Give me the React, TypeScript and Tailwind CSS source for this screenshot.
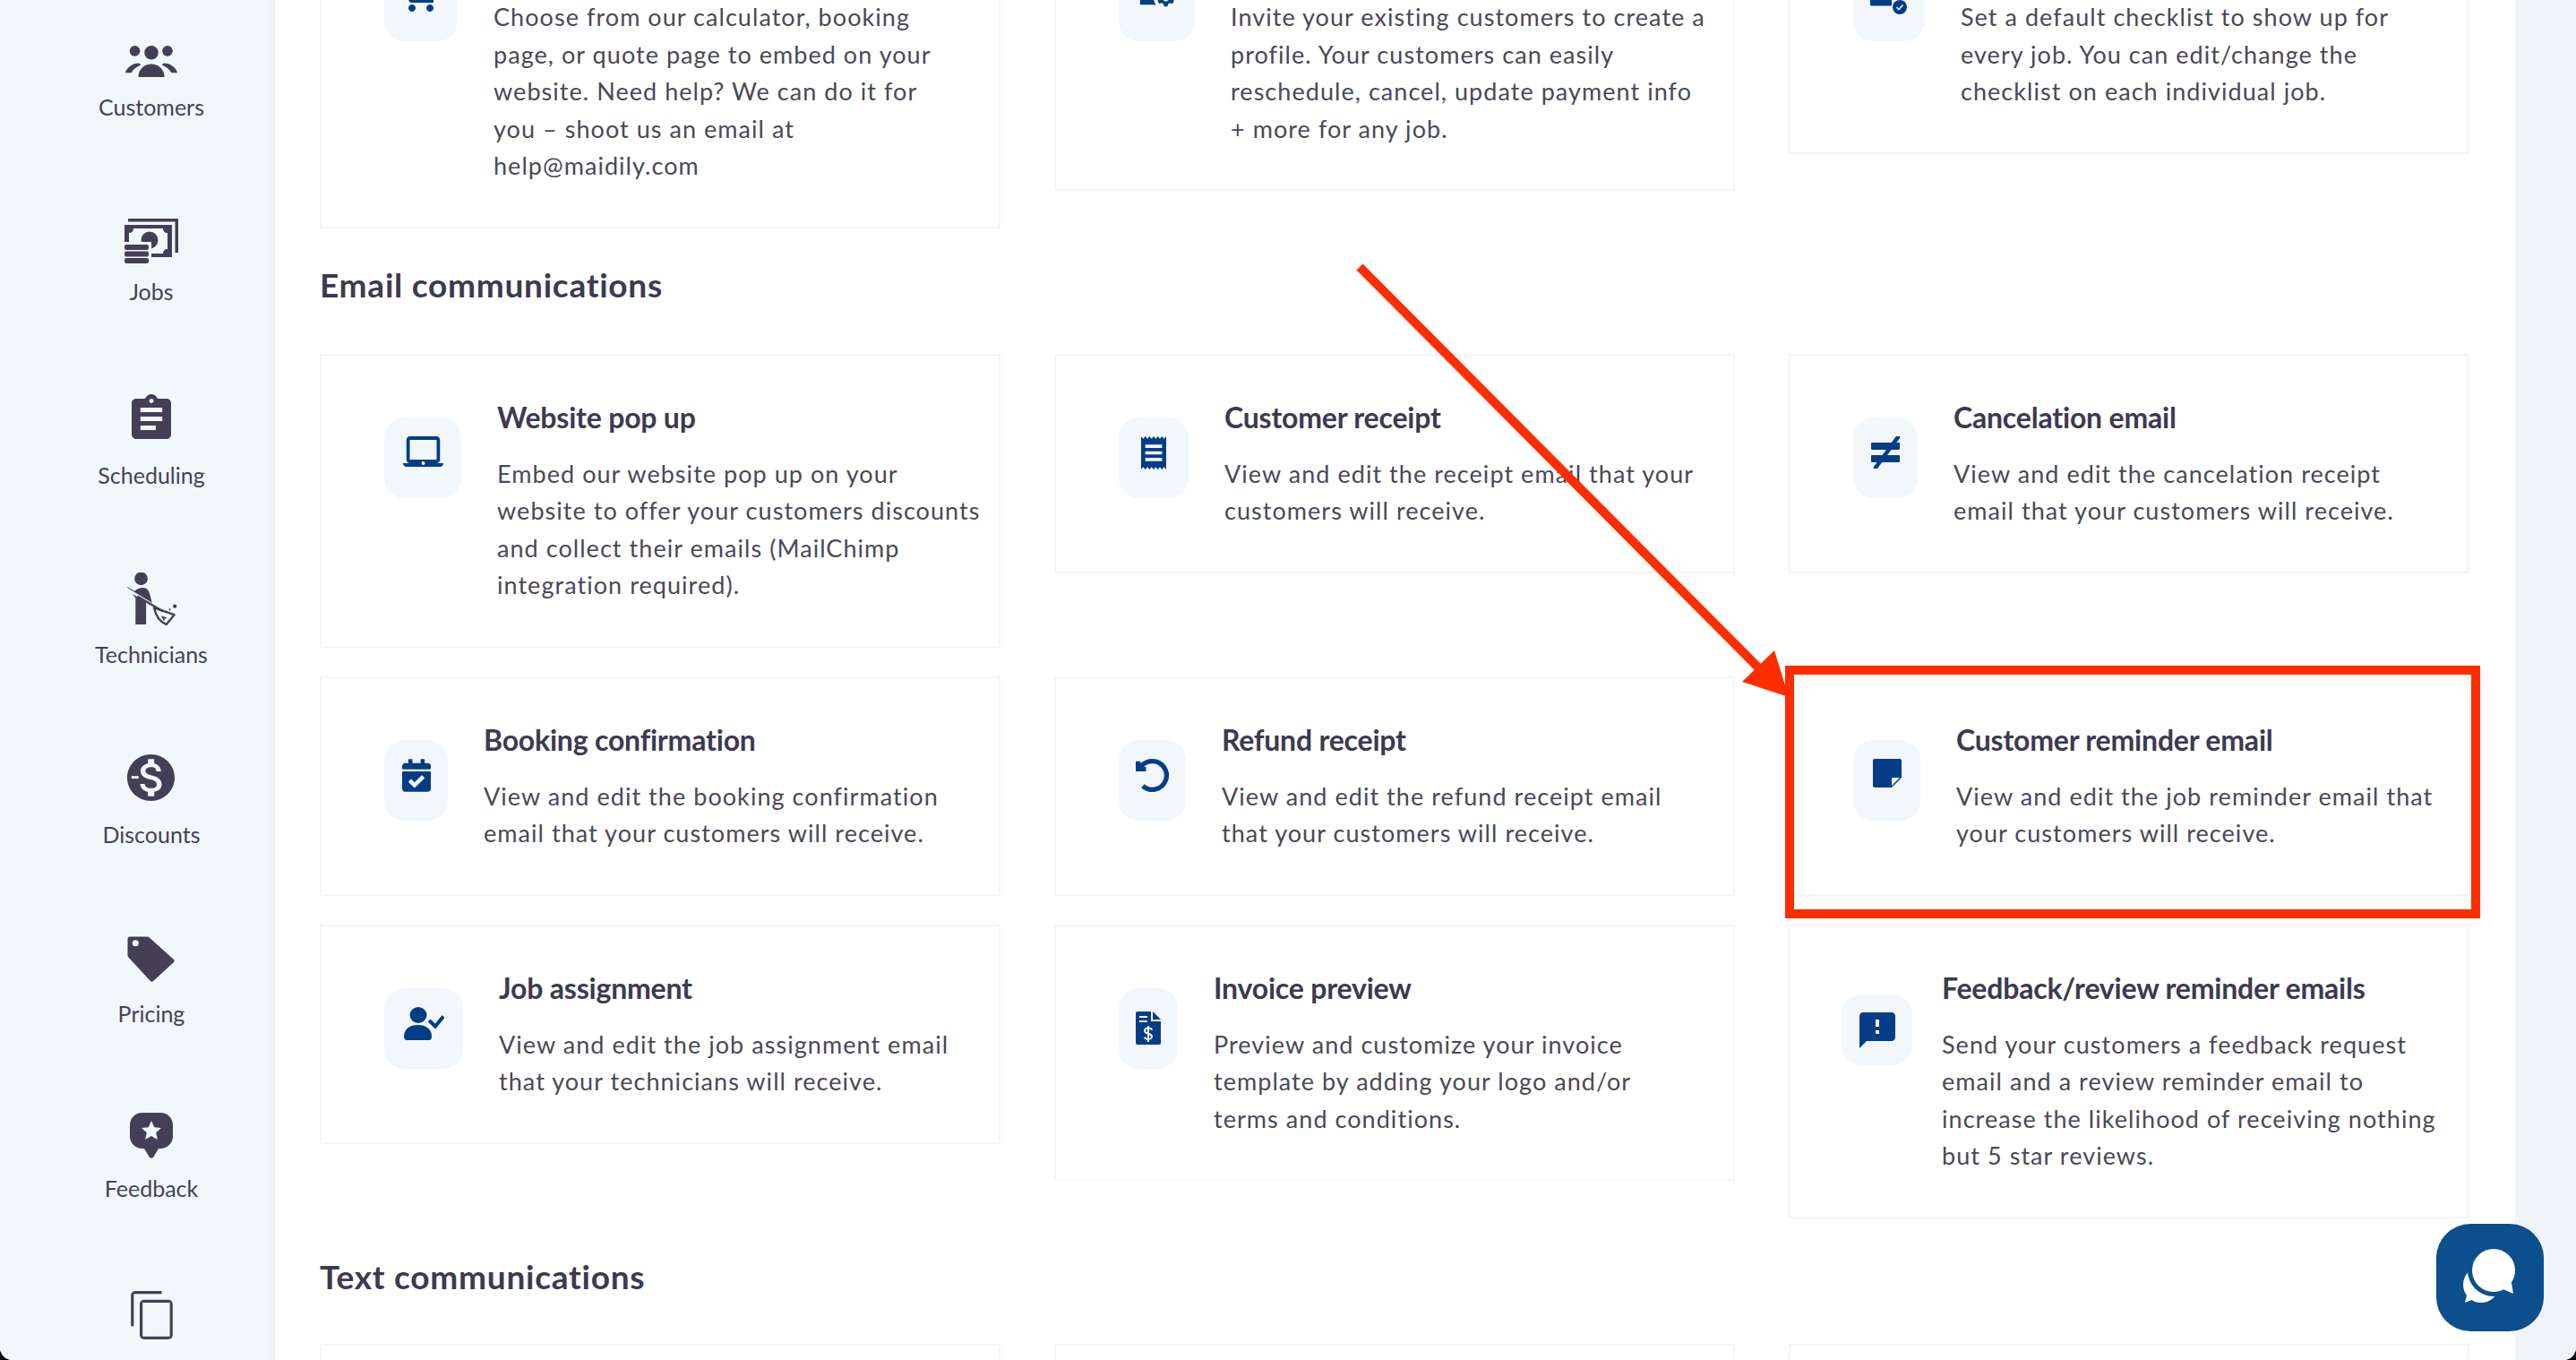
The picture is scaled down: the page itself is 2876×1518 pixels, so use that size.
import React from 'react';
import { MdShoppingCart, MdManageAccounts, MdAssignment, MdFeedback } from 'react-icons/md';
import { FaCalendarCheck } from 'react-icons/fa';

const BLUE = '#043d85';
const NAV = '#443f56';

// sidebar glyphs
const CustomersIcon = () => (
  <svg viewBox="0 0 60 36" className="h-[35px] w-[60px]" fill={NAV}>
    <circle cx="11" cy="6" r="6" />
    <circle cx="30" cy="8" r="8" />
    <circle cx="48.5" cy="6" r="6" />
    <path d="M15 36C15 27 22 21 30 21s15 6 15 15z" />
    <path d="M0 31C2 25 8 20 16 20l2 2C13 24 9 27 7 31z" />
    <path d="M60 31C58 25 52 20 44 20l-2 2c5 2 9 5 11 9z" />
  </svg>
);

const JobsIcon = () => (
  <svg viewBox="0 0 60 50" className="h-[50px] w-[60px]" fill={NAV}>
    <path d="M4 0h56v38h-3.5V3.5H4z" />
    <path d="M0 7h53v36H0z" />
    <path d="M10 11h33c0 3 2 5 5 5v18c-3 0-5 2-5 5H12c0-3-6-5-7-5V16c3 0 5-2 5-5z" fill="#f2f7fb" />
    <circle cx="28" cy="24" r="9.5" />
    <path d="M0 26h30v24H0z" fill="#f2f7fb" />
    <rect x="0" y="29" width="27" height="6" rx="2" />
    <rect x="0" y="36.5" width="27" height="6" rx="2" />
    <rect x="0" y="44" width="27" height="6" rx="2" />
  </svg>
);

const SchedulingIcon = () => (
  <MdAssignment viewBox="3 1 18 20" className="h-[50px] w-[44px]" color={NAV} preserveAspectRatio="none" />
);

const TechniciansIcon = () => (
  <svg viewBox="9 9 60 60" className="h-[59px] w-[60px]" fill={NAV}>
    <circle cx="27.3" cy="16" r="7.5" />
    <path d="M11 25l9 5c3-3 9-5 13-3 2 1 3 3 4 6l3 11-7-3v27H21V38z" />
    <path d="M10 27l46 28" stroke="#f2f7fb" strokeWidth="3" />
    <path d="M23 36l29 17" stroke={NAV} strokeWidth="2.5" />
    <path d="M42 49l23 8-9 11c-8-3-12-10-14-19z" fill="none" stroke={NAV} strokeWidth="2.4" strokeLinejoin="round" />
    <path d="M50 58l6 2-3 4z" />
    <circle cx="65.6" cy="47.3" r="2.2" />
    <circle cx="60" cy="51" r="1.1" />
  </svg>
);

const DiscountsIcon = () => (
  <svg viewBox="2 2 20 20" className="h-[52px] w-[53px]" preserveAspectRatio="none">
    <path
      fill={NAV}
      d="M12 2C6.48 2 2 6.48 2 12s4.48 10 10 10 10-4.48 10-10S17.52 2 12 2zm1.41 16.09V20h-2.67v-1.93c-1.71-.36-3.16-1.46-3.27-3.4h1.96c.1 1.05.82 1.87 2.65 1.87 1.96 0 2.4-.98 2.4-1.59 0-.83-.44-1.61-2.67-2.14-2.48-.6-4.18-1.62-4.18-3.67 0-1.72 1.39-2.84 3.11-3.21V4h2.67v1.95c1.86.45 2.79 1.86 2.87 3.39h-1.96c-.05-1.11-.64-1.87-2.22-1.87-1.5 0-2.4.68-2.4 1.64 0 .84.65 1.39 2.67 1.91s4.18 1.39 4.18 3.91c-.01 1.83-1.38 2.83-3.12 3.16z"
    />
    <rect x="3.8" y="11.3" width="3" height="1.1" fill="#f2f7fb" />
  </svg>
);

const PricingIcon = () => (
  <svg viewBox="0 0 54 54" className="h-[53px] w-[53px]">
    <path
      d="M3 4h20l28 25-23 21L3 23z"
      fill={NAV}
      stroke={NAV}
      strokeWidth="5"
      strokeLinejoin="round"
    />
    <circle cx="9.5" cy="9" r="3.6" fill="#f2f7fb" />
  </svg>
);

const FeedbackIcon = () => (
  <svg viewBox="0 0 48 51" className="h-[51px] w-[48px]">
    <path
      d="M14 0h20c8 0 14 6 14 14v12c0 8-6 14-14 14h-2l-6 10c-1 1-3 1-4 0l-6-10h-2C6 40 0 34 0 26V14C0 6 6 0 14 0z"
      fill={NAV}
    />
    <path
      d="M24 9l3.3 7.2 7.7.8-5.8 5.2 1.7 7.8-6.900-4-6.900 4 1.700-7.800L13 17l7.700-.8z"
      fill="#f2f7fb"
    />
  </svg>
);

const CopyIcon = () => (
  <svg viewBox="2 1 19 22" className="h-[54px] w-[47px]" fill={NAV}>
    <path d="M16 1H4c-1.100 0-2 .9-2 2v14h1.300V2.300H16zm3 4H8c-1.100 0-2 .9-2 2v14c0 1.100.9 2 2 2h11c1.100 0 2-.9 2-2V7c0-1.100-.9-2-2-2zm.7 16.700H7.300V6.300h12.400z" />
  </svg>
);

// card glyphs
const LaptopIcon = () => (
  <svg viewBox="0 3 24 18" className="h-[36px] w-[45px]" fill={BLUE} preserveAspectRatio="none">
    <path d="M20 18c1.100 0 1.990-.9 1.990-2L22 5c0-1.100-.9-2-2-2H4c-1.100 0-2 .9-2 2v11c0 1.100.9 2 2 2H0c0 1.100.9 2 2 2h20c1.100 0 2-.9 2-2h-4zM4 5h16v11H4V5zm8 14c-.55 0-1-.45-1-1s.45-1 1-1 1 .45 1 1-.45 1-1 1z" />
  </svg>
);

const ReceiptIcon = () => (
  <svg viewBox="3 2 18 20" className="h-[37px] w-[28px]" fill={BLUE} preserveAspectRatio="none">
    <path d="M18 17H6v-2h12v2zm0-4H6v-2h12v2zm0-4H6V7h12v2zM3 22l1.500-1.500L6 22l1.500-1.500L9 22l1.500-1.500L12 22l1.500-1.500L15 22l1.500-1.500L18 22l1.500-1.500L21 22V2l-1.500 1.500L18 2l-1.500 1.500L15 2l-1.500 1.500L12 2l-1.500 1.500L9 2 7.500 3.500 6 2 4.500 3.500 3 2v20z" />
  </svg>
);

const NotEqualIcon = () => (
  <svg viewBox="0 0 32 36" className="h-[36px] w-[32px]" fill={BLUE}>
    <rect x="0" y="7" width="32" height="8" rx="1" />
    <rect x="0" y="21" width="32" height="8" rx="1" />
    <path d="M30 1L5 35" stroke={BLUE} strokeWidth="4.500" strokeLinecap="round" />
  </svg>
);

const RefundIcon = () => (
  <svg viewBox="1.500 1.500 21 21" className="h-[37px] w-[37px]" fill="none" stroke={BLUE} strokeWidth="3">
    <path d="M6 18.700A9 9 0 1 0 12 3 9.750 9.750 0 0 0 5.260 5.740L3 8" />
    <path d="M3 3v5h5" />
  </svg>
);

const NoteIcon = () => (
  <svg viewBox="0 0 32 32" className="h-[32px] w-[32px]" fill={BLUE}>
    <path d="M2 0h28a2 2 0 0 1 2 2v19L21 32H2a2 2 0 0 1-2-2V2a2 2 0 0 1 2-2z" />
    <path d="M21 21h9l-9 9z" fill="#f2f7fb" />
  </svg>
);

const UserCheckIcon = () => (
  <svg viewBox="0 0 45 37" className="h-[37px] w-[45px]" fill={BLUE}>
    <ellipse cx="16" cy="9" rx="9.500" ry="9" />
    <path d="M0 33c0-9 7-13 15.500-13S31 24 31 33c0 2-1 4-3 4H3c-2 0-3-2-3-4z" />
    <path d="M28 15l7 6.500 9-11" fill="none" stroke={BLUE} strokeWidth="4" />
  </svg>
);

const InvoiceIcon = () => (
  <svg viewBox="0 0 28 37" className="h-[37px] w-[28px]">
    <path d="M2 0h15v11h11v24a2 2 0 0 1-2 2H2a2 2 0 0 1-2-2V2a2 2 0 0 1 2-2z" fill={BLUE} />
    <path d="M19 0l9 9h-9z" fill={BLUE} />
    <path d="M4 6h9M4 11h9" stroke="#f2f7fb" strokeWidth="2" />
    <path
      d="M18.500 20.500c-1-1.500-3-2-4.500-2s-4 .7-4 3 2.500 2.800 4 3.200 4 1 4 3.200-2.500 3-4 3-3.500-.5-4.500-2M14 16v18"
      fill="none"
      stroke="#f2f7fb"
      strokeWidth="2"
    />
  </svg>
);

const BubbleAlertIcon = () => <MdFeedback viewBox="2 2 20 20" className="h-[40px] w-[40px]" color={BLUE} />;

const CalendarIcon = () => <FaCalendarCheck className="h-[37px] w-[32px]" color={BLUE} />;

const CartIcon = () => <MdShoppingCart className="h-[48px] w-[48px]" color={BLUE} />;

const AccountsIcon = () => <MdManageAccounts className="h-[46px] w-[46px]" color={BLUE} />;

const ChecklistIcon = () => (
  <svg viewBox="0 0 42 37" className="h-[37px] w-[42px]" fill={BLUE}>
    <rect x="0" y="18" width="24" height="9.500" rx="1" />
    <circle cx="33" cy="29" r="8" />
    <path d="M29.500 29l2.500 2.500 4.500-5" fill="none" stroke="#f2f7fb" strokeWidth="1.600" />
  </svg>
);

const ChatIcon = () => (
  <svg viewBox="0 0 120 120" className="h-[120px] w-[120px]">
    <circle cx="50" cy="68" r="20" fill="#fff" />
    <path d="M32 88l15-6-11-10z" fill="#fff" />
    <circle cx="64" cy="52" r="29" fill="#0b4f8c" />
    <circle cx="64" cy="52" r="24" fill="#fff" />
    <path d="M72 72l14 6-3-18z" fill="#fff" />
  </svg>
);

const navItems = [
  { label: 'Customers', icon: <CustomersIcon />, labelGap: 'mt-[18px]', after: 'mb-[110px]' },
  { label: 'Jobs', icon: <JobsIcon />, labelGap: 'mt-[16px]', after: 'mb-[100px]' },
  { label: 'Scheduling', icon: <SchedulingIcon />, labelGap: 'mt-[25px]', after: 'mb-[94px]' },
  { label: 'Technicians', icon: <TechniciansIcon />, labelGap: 'mt-[17px]', after: 'mb-[97px]' },
  { label: 'Discounts', icon: <DiscountsIcon />, labelGap: 'mt-[22px]', after: 'mb-[98px]' },
  { label: 'Pricing', icon: <PricingIcon />, labelGap: 'mt-[19px]', after: 'mb-[96px]' },
  { label: 'Feedback', icon: <FeedbackIcon />, labelGap: 'mt-[18px]', after: 'mb-[100px]' },
];

interface CardData {
  title?: string;
  lines: string[];
  icon: React.ReactNode;
  tile: string;
  pad?: string;
}

const topCards: CardData[] = [
  {
    lines: [
      'Choose from our calculator, booking',
      'page, or quote page to embed on your',
      'website. Need help? We can do it for',
      'you – shoot us an email at',
      'help@maidily.com',
    ],
    icon: <CartIcon />,
    tile: 'w-[82px] h-[90px] mt-[21px] pt-[13px]',
  },
  {
    lines: [
      'Invite your existing customers to create a',
      'profile. Your customers can easily',
      'reschedule, cancel, update payment info',
      '+ more for any job.',
    ],
    icon: <AccountsIcon />,
    tile: 'w-[85px] h-[90px] mt-[21px] pt-[11px]',
  },
  {
    lines: [
      'Set a default checklist to show up for',
      'every job. You can edit/change the',
      'checklist on each individual job.',
    ],
    icon: <ChecklistIcon />,
    tile: 'w-[80px] h-[90px] mt-[21px] pt-[23px]',
  },
];

const emailCards: CardData[] = [
  {
    title: 'Website pop up',
    lines: [
      'Embed our website pop up on your',
      'website to offer your customers discounts',
      'and collect their emails (MailChimp',
      'integration required).',
    ],
    icon: <LaptopIcon />,
    tile: 'w-[86px] h-[90px] mt-[21px] pt-[21px]',
  },
  {
    title: 'Customer receipt',
    lines: ['View and edit the receipt email that your', 'customers will receive.'],
    icon: <ReceiptIcon />,
    tile: 'w-[78px] h-[90px] mt-[21px] pt-[21px]',
  },
  {
    title: 'Cancelation email',
    lines: ['View and edit the cancelation receipt', 'email that your customers will receive.'],
    icon: <NotEqualIcon />,
    tile: 'w-[72px] h-[90px] mt-[21px] pt-[21px]',
  },
  {
    title: 'Booking confirmation',
    lines: ['View and edit the booking confirmation', 'email that your customers will receive.'],
    icon: <CalendarIcon />,
    tile: 'w-[71px] h-[90px] mt-[21px] pt-[21px]',
  },
  {
    title: 'Refund receipt',
    lines: ['View and edit the refund receipt email', 'that your customers will receive.'],
    icon: <RefundIcon />,
    tile: 'w-[75px] h-[90px] mt-[21px] pt-[21px]',
  },
  {
    title: 'Customer reminder email',
    lines: ['View and edit the job reminder email that', 'your customers will receive.'],
    icon: <NoteIcon />,
    tile: 'w-[75px] h-[90px] mt-[21px] pt-[21px]',
  },
  {
    title: 'Job assignment',
    lines: ['View and edit the job assignment email', 'that your technicians will receive.'],
    icon: <UserCheckIcon />,
    tile: 'w-[88px] h-[90px] mt-[21px] pt-[21px]',
  },
  {
    title: 'Invoice preview',
    lines: ['Preview and customize your invoice', 'template by adding your logo and/or', 'terms and conditions.'],
    icon: <InvoiceIcon />,
    tile: 'w-[66px] h-[90px] mt-[21px] pt-[26px]',
  },
  {
    title: 'Feedback/review reminder emails',
    lines: [
      'Send your customers a feedback request',
      'email and a review reminder email to',
      'increase the likelihood of receiving nothing',
      'but 5 star reviews.',
    ],
    icon: <BubbleAlertIcon />,
    tile: 'w-[79px] h-[79px] mt-[28px] pt-[20px]',
    pad: 'pl-[57px] gap-[33px]',
  },
];

const Card: React.FC<CardData> = ({ title, lines, icon, tile, pad }) => (
  <div className={`flex items-start border-2 border-[#f3f4f5] pb-[47px] pt-[48px] ${pad || 'pl-[70px] gap-[40px]'}`}>
    <div className={`flex shrink-0 justify-center rounded-[22px] bg-[#f2f7fb] ${tile}`}>{icon}</div>
    <div className="min-w-0">
      <h3 className="mb-[21px] h-[42px] whitespace-nowrap text-[32px] font-bold leading-[42px] tracking-[-0.2px] text-[#3c3a50]">
        {title}
      </h3>
      <p className="whitespace-nowrap text-[27px] leading-[41.5px] tracking-[1.05px] text-[#4a4858]">
        {lines.map((l) => (
          <span key={l} className="block">{l}</span>
        ))}
      </p>
    </div>
  </div>
);

export default function App() {
  return (
    <div className="relative h-[1518px] w-[2876px] overflow-hidden bg-black font-[Lato,sans-serif]">
      <div className="flex h-full overflow-hidden rounded-b-[14px] bg-white">
        {/* Sidebar */}
        <aside className="flex w-[307px] shrink-0 flex-col items-center bg-linear-to-r from-[#f2f7fb] from-[97%] to-[#edf2f6] pl-[31px] pt-[51px]">
          {navItems.map((n) => (
            <div key={n.label} className={`flex flex-col items-center ${n.after}`}>
              {n.icon}
              <span className={`text-[25px] leading-[30px] text-[#454258] ${n.labelGap}`}>{n.label}</span>
            </div>
          ))}
          <CopyIcon />
        </aside>

        {/* Main column, scrolled part way down */}
        <main className="min-w-0 flex-1 pl-[50px]">
          <div className="-mt-[115px] w-[2400px]">
            <div className="grid grid-cols-3 items-start gap-x-[60px]">
              {topCards.map((c) => (
                <Card key={c.lines[0]} {...c} />
              ))}
            </div>

            <h2 className="mb-[52px] mt-[38px] text-[37px] font-bold leading-[50px] tracking-[0.75px] text-[#3c3a50]">Email communications</h2>
            <div className="grid grid-cols-3 items-start gap-x-[60px] gap-y-[32px]">
              {emailCards.map((c) => (
                <Card key={c.title} {...c} />
              ))}
            </div>

            <h2 className="mb-[50px] mt-[40px] text-[37px] font-bold leading-[50px] tracking-[0.75px] text-[#3c3a50]">Text communications</h2>
            <div className="grid grid-cols-3 gap-x-[60px]">
              <div className="h-[245px] border-2 border-[#f3f4f5]" />
              <div className="h-[245px] border-2 border-[#f3f4f5]" />
              <div className="h-[245px] border-2 border-[#f3f4f5]" />
            </div>
          </div>
        </main>

        <div className="w-[68px] shrink-0 bg-[#f0f4f8]" />
      </div>

      {/* Chat launcher */}
      <div className="absolute left-[2720px] top-[1366px] h-[120px] w-[120px] rounded-[38px] bg-[#0b4f8c]">
        <ChatIcon />
      </div>

      {/* Red annotation */}
      <div className="pointer-events-none absolute left-[1993px] top-[743px] h-[282px] w-[776px] border-[10px] border-[#ff2d00]" />
      <svg className="pointer-events-none absolute left-0 top-0 h-[1518px] w-[2876px]" viewBox="0 0 2876 1518">
        <line x1="1518" y1="298" x2="1968" y2="750" stroke="#ff2d00" strokeWidth="10" />
        <polygon points="1981,726 1945,761 1997,778" fill="#ff2d00" />
      </svg>
    </div>
  );
}
